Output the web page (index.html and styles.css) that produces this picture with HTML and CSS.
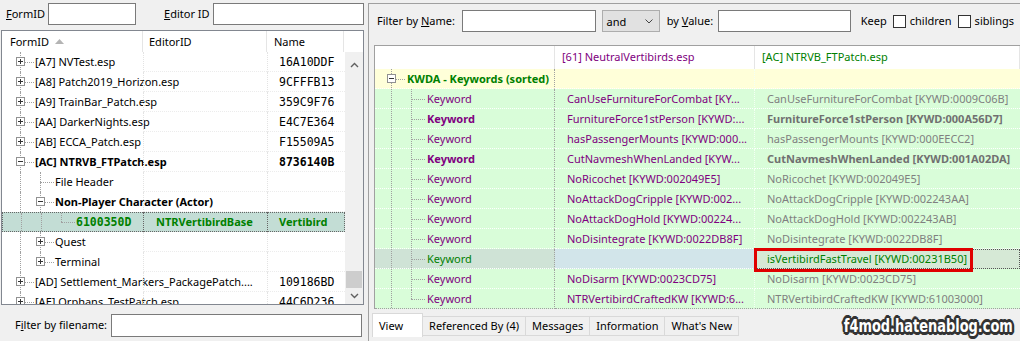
FILE: index.html
```html
<!DOCTYPE html>
<html lang="en">
<head>
    <meta charset="UTF-8">
    <title>FO4Edit - NTRVB_FTPatch.esp</title>
    <link rel="stylesheet" href="styles.css">
</head>
<body>
    <div class="app">
        <!-- left side: record tree -->
        <div class="left">
            <div class="id-filter">
                <span class="lbl"><u>F</u>ormID</span>
                <div class="field f-formid"></div>
                <span class="lbl lbl-editor"><u>E</u>ditor ID</span>
                <div class="field f-editor"></div>
            </div>

            <div class="tree">
                <div class="tree-head">
                    <div class="th c1">FormID
                        <svg class="sort" width="9" height="5" viewBox="0 0 9 5"><polygon points="0,5 4.5,0 9,5" fill="#b4b4b4"/></svg>
                    </div>
                    <div class="th c2">EditorID</div>
                    <div class="th c3">Name</div>
                    <div class="th c4"></div>
                </div>
                <div class="tree-main">
                    <div class="tree-rows">
                        <div class="trow">
                            <div class="c1"><span class="tw"><i class="box plus"></i></span><span class="txt">[A7] NVTest.esp</span></div>
                            <div class="c2"></div><div class="c3 mono">16A10DDF</div>
                        </div>
                        <div class="trow">
                            <div class="c1"><span class="tw"><i class="box plus"></i></span><span class="txt">[A8] Patch2019_Horizon.esp</span></div>
                            <div class="c2"></div><div class="c3 mono">9CFFFB13</div>
                        </div>
                        <div class="trow">
                            <div class="c1"><span class="tw"><i class="box plus"></i></span><span class="txt">[A9] TrainBar_Patch.esp</span></div>
                            <div class="c2"></div><div class="c3 mono">359C9F76</div>
                        </div>
                        <div class="trow">
                            <div class="c1"><span class="tw"><i class="box plus"></i></span><span class="txt">[AA] DarkerNights.esp</span></div>
                            <div class="c2"></div><div class="c3 mono">E4C7E364</div>
                        </div>
                        <div class="trow">
                            <div class="c1"><span class="tw"><i class="box plus"></i></span><span class="txt">[AB] ECCA_Patch.esp</span></div>
                            <div class="c2"></div><div class="c3 mono">F15509A5</div>
                        </div>
                        <div class="trow bold">
                            <div class="c1"><span class="tw"><i class="box"></i></span><span class="txt">[AC] NTRVB_FTPatch.esp</span></div>
                            <div class="c2"></div><div class="c3 mono">8736140B</div>
                        </div>
                        <div class="trow">
                            <div class="c1"><span class="guide"></span><span class="tw"></span><span class="txt">File Header</span></div>
                            <div class="c2"></div><div class="c3"></div>
                        </div>
                        <div class="trow">
                            <div class="c1"><span class="guide"></span><span class="tw"><i class="box"></i></span><span class="txt bold">Non-Player Character (Actor)</span></div>
                            <div class="c2"></div><div class="c3"></div>
                        </div>
                        <div class="trow sel">
                            <div class="c1"><span class="guide"></span><span class="guide"></span><span class="tw last"></span><span class="txt mono">6100350D</span></div>
                            <div class="c2">NTRVertibirdBase</div><div class="c3">Vertibird</div>
                        </div>
                        <div class="trow">
                            <div class="c1"><span class="guide"></span><span class="tw"><i class="box plus"></i></span><span class="txt">Quest</span></div>
                            <div class="c2"></div><div class="c3"></div>
                        </div>
                        <div class="trow">
                            <div class="c1"><span class="guide"></span><span class="tw last"><i class="box plus"></i></span><span class="txt">Terminal</span></div>
                            <div class="c2"></div><div class="c3"></div>
                        </div>
                        <div class="trow">
                            <div class="c1"><span class="tw"><i class="box plus"></i></span><span class="txt">[AD] Settlement_Markers_PackagePatch....</span></div>
                            <div class="c2"></div><div class="c3 mono">109186BD</div>
                        </div>
                        <div class="trow">
                            <div class="c1"><span class="tw"><i class="box plus"></i></span><span class="txt">[AE] Orphans_TestPatch.esp</span></div>
                            <div class="c2"></div><div class="c3 mono">44C6D236</div>
                        </div>
                    </div>
                    <div class="vscroll">
                        <div class="sb-btn up">
                            <svg width="9" height="6" viewBox="0 0 9 6"><polyline points="1,5 4.5,1.5 8,5" fill="none" stroke="#606060" stroke-width="1.4"/></svg>
                        </div>
                        <div class="sb-track"><div class="sb-thumb"></div></div>
                        <div class="sb-btn down">
                            <svg width="9" height="6" viewBox="0 0 9 6"><polyline points="1,1 4.5,4.5 8,1" fill="none" stroke="#606060" stroke-width="1.4"/></svg>
                        </div>
                    </div>
                </div>
            </div>

            <div class="file-filter">
                <span class="lbl">F<u>i</u>lter by filename:</span>
                <div class="field f-file"></div>
            </div>
        </div>

        <div class="splitter"></div>

        <!-- right side: record view -->
        <div class="right">
            <div class="view-filter">
                <span class="lbl">Filter by <u>N</u>ame:</span>
                <div class="field f-name"></div>
                <div class="combo">and
                    <svg width="8" height="5" viewBox="0 0 8 5"><polyline points="0.5,0.5 4,4 7.5,0.5" fill="none" stroke="#444" stroke-width="1"/></svg>
                </div>
                <span class="lbl lbl-value">by <u>V</u>alue:</span>
                <div class="field f-value"></div>
                <span class="lbl lbl-keep">Keep</span>
                <span class="check"></span><span class="lbl">children</span>
                <span class="check"></span><span class="lbl">siblings</span>
            </div>

            <div class="grid">
                <div class="grow ghead">
                    <div class="k"></div>
                    <div class="v1 purple">[61] NeutralVertibirds.esp</div>
                    <div class="v2 green">[AC] NTRVB_FTPatch.esp</div>
                </div>
                <div class="grow group">
                    <div class="k"><span class="tw"><i class="box"></i></span><span class="txt green semi">KWDA - Keywords (sorted)</span></div>
                    <div class="v1"></div>
                    <div class="v2"></div>
                </div>
                <div class="grow">
                    <div class="k"><span class="guide"></span><span class="tw"></span><span class="txt">Keyword</span></div>
                    <div class="v1">CanUseFurnitureForCombat [KY...</div>
                    <div class="v2">CanUseFurnitureForCombat [KYWD:0009C06B]</div>
                </div>
                <div class="grow strong">
                    <div class="k"><span class="guide"></span><span class="tw"></span><span class="txt">Keyword</span></div>
                    <div class="v1">FurnitureForce1stPerson [KYWD:...</div>
                    <div class="v2">FurnitureForce1stPerson [KYWD:000A56D7]</div>
                </div>
                <div class="grow">
                    <div class="k"><span class="guide"></span><span class="tw"></span><span class="txt">Keyword</span></div>
                    <div class="v1">hasPassengerMounts [KYWD:000...</div>
                    <div class="v2">hasPassengerMounts [KYWD:000EECC2]</div>
                </div>
                <div class="grow strong">
                    <div class="k"><span class="guide"></span><span class="tw"></span><span class="txt">Keyword</span></div>
                    <div class="v1">CutNavmeshWhenLanded [KYW...</div>
                    <div class="v2">CutNavmeshWhenLanded [KYWD:001A02DA]</div>
                </div>
                <div class="grow">
                    <div class="k"><span class="guide"></span><span class="tw"></span><span class="txt">Keyword</span></div>
                    <div class="v1">NoRicochet [KYWD:002049E5]</div>
                    <div class="v2">NoRicochet [KYWD:002049E5]</div>
                </div>
                <div class="grow">
                    <div class="k"><span class="guide"></span><span class="tw"></span><span class="txt">Keyword</span></div>
                    <div class="v1">NoAttackDogCripple [KYWD:002...</div>
                    <div class="v2">NoAttackDogCripple [KYWD:002243AA]</div>
                </div>
                <div class="grow">
                    <div class="k"><span class="guide"></span><span class="tw"></span><span class="txt">Keyword</span></div>
                    <div class="v1">NoAttackDogHold [KYWD:00224...</div>
                    <div class="v2">NoAttackDogHold [KYWD:002243AB]</div>
                </div>
                <div class="grow">
                    <div class="k"><span class="guide"></span><span class="tw"></span><span class="txt">Keyword</span></div>
                    <div class="v1">NoDisintegrate [KYWD:0022DB8F]</div>
                    <div class="v2">NoDisintegrate [KYWD:0022DB8F]</div>
                </div>
                <div class="grow focus">
                    <div class="k"><span class="guide"></span><span class="tw"></span><span class="txt">Keyword</span></div>
                    <div class="v1"></div>
                    <div class="v2">isVertibirdFastTravel [KYWD:00231B50]<span class="mark"></span></div>
                </div>
                <div class="grow">
                    <div class="k"><span class="guide"></span><span class="tw"></span><span class="txt">Keyword</span></div>
                    <div class="v1">NoDisarm [KYWD:0023CD75]</div>
                    <div class="v2">NoDisarm [KYWD:0023CD75]</div>
                </div>
                <div class="grow lastrow">
                    <div class="k"><span class="guide"></span><span class="tw last"></span><span class="txt">Keyword</span></div>
                    <div class="v1">NTRVertibirdCraftedKW [KYWD:6...</div>
                    <div class="v2">NTRVertibirdCraftedKW [KYWD:61003000]</div>
                </div>
            </div>

            <div class="tabs">
                <div class="tab on">View</div>
                <div class="tab">Referenced By (4)</div>
                <div class="tab">Messages</div>
                <div class="tab">Information</div>
                <div class="tab">What's New</div>
            </div>

            <div class="watermark">f4mod.hatenablog.com</div>
        </div>
    </div>
</body>
</html>
```

FILE: styles.css
```css
* {
    box-sizing: border-box;
}

body {
    margin: 0;
    width: 1020px;
    height: 341px;
    overflow: hidden;
    background: #f0f0f0;
    font-family: 'Noto Sans', sans-serif;
    font-size: 11px;
    color: #000;
}

.app {
    display: flex;
    height: 341px;
}

.lbl {
    line-height: 22px;
    white-space: nowrap;
}

.field {
    height: 22px;
    border: 1px solid #7a7a7a;
    background: #fff;
}

.mono {
    font-family: 'DejaVu Sans Mono', monospace;
    font-size: 11.5px;
}

.bold {
    font-weight: bold;
}

/* ---------- left pane ---------- */

.left {
    width: 364px;
    flex: none;
    display: flex;
    flex-direction: column;
}

.id-filter {
    height: 30px;
    display: flex;
    padding: 3px 0 0 6px;
}

.f-formid {
    width: 89px;
    margin-left: 3px;
}

.lbl-editor {
    margin-left: 28px;
}

.f-editor {
    width: 153px;
    margin-left: 3px;
}

.tree {
    width: 363px;
    height: 275px;
    margin-left: 1px;
    border: 1px solid #828790;
    background: #fff;
    display: flex;
    flex-direction: column;
    overflow: hidden;
}

.tree-head {
    height: 21px;
    display: flex;
    flex: none;
}

.th {
    line-height: 22px;
    border-right: 1px solid #e5e5e5;
    white-space: nowrap;
}

.th.c1 {
    width: 141px;
    padding-left: 8px;
}

.th.c2 {
    width: 124px;
    padding-left: 6px;
}

.th.c3 {
    width: 77px;
    padding-left: 7px;
}

.th.c4 {
    flex: 1;
    border-right: none;
}

.sort {
    margin-left: 3px;
    vertical-align: 2px;
}

.tree-main {
    flex: 1;
    display: flex;
    overflow: hidden;
}

.tree-rows {
    flex: 1;
    overflow: hidden;
}

.trow {
    height: 20px;
    display: flex;
}

.trow > div {
    height: 20px;
    line-height: 20px;
    white-space: nowrap;
    overflow: hidden;
}

.trow .c1 {
    width: 141px;
    display: flex;
    padding-left: 8px;
    overflow: visible;
}

.trow .c2 {
    width: 124px;
    padding-left: 12px;
    border-left: 1px dotted #e3e3e3;
    border-bottom: 1px dotted #ececec;
}

.trow .c3 {
    flex: 1;
    padding-left: 11px;
    border-left: 1px dotted #e3e3e3;
    border-bottom: 1px dotted #ececec;
}

.trow .txt {
    margin-left: 5px;
}

.trow.sel > div {
    background: #c3ddd5;
    color: #008000;
    font-weight: bold;
    border: 1px dotted #666;
    border-right: none;
    line-height: 18px;
}

.trow.sel .c3 {
    border-right: 1px dotted #666;
}

/* tree connector lines */
.tw,
.guide {
    position: relative;
    width: 20px;
    height: 100%;
    flex: none;
}

.guide::before,
.tw::before {
    content: "";
    position: absolute;
    left: 10px;
    top: 0;
    bottom: 0;
    border-left: 1px dotted #a0a0a0;
}

.tw.last::before {
    bottom: 50%;
}

.tw::after {
    content: "";
    position: absolute;
    left: 10px;
    right: -4px;
    top: 50%;
    border-top: 1px dotted #a0a0a0;
}

.box {
    position: absolute;
    left: 6px;
    top: 50%;
    margin-top: -5px;
    width: 9px;
    height: 9px;
    border: 1px solid #919191;
    background: #fff;
    z-index: 1;
}

.box::before {
    content: "";
    position: absolute;
    left: 1px;
    right: 1px;
    top: 3px;
    height: 1px;
    background: #333;
}

.box.plus::after {
    content: "";
    position: absolute;
    top: 1px;
    bottom: 1px;
    left: 3px;
    width: 1px;
    background: #333;
}

.vscroll {
    width: 18px;
    flex: none;
    display: flex;
    flex-direction: column;
    background: #f0f0f0;
    padding-top: 3px;
}

.sb-btn {
    height: 20px;
    display: flex;
    align-items: center;
    justify-content: center;
}

.sb-btn.down {
    height: 16px;
}

.sb-track {
    flex: 1;
    display: flex;
    flex-direction: column;
    justify-content: flex-end;
    padding: 0 1px;
}

.sb-thumb {
    height: 17px;
    background: #cdcdcd;
}

.file-filter {
    flex: 1;
    display: flex;
    padding: 9px 0 0 15px;
}

.f-file {
    flex: 1;
    height: 23px;
    margin: 0 2px 0 4px;
}

/* ---------- right pane ---------- */

.splitter {
    width: 4px;
    flex: none;
}

.right {
    flex: 1;
    margin-top: 3px;
    border-top: 1px solid #a0a0a0;
    border-left: 1px solid #a0a0a0;
    display: flex;
    flex-direction: column;
    position: relative;
    overflow: hidden;
}

.view-filter {
    height: 41px;
    flex: none;
    display: flex;
    padding: 6px 0 0 8px;
}

.f-name {
    width: 136px;
    margin-left: 7px;
}

.combo {
    width: 59px;
    height: 22px;
    margin-left: 6px;
    padding: 0 6px 0 4px;
    background: #e1e1e1;
    border: 1px solid #adadad;
    display: flex;
    align-items: center;
    justify-content: space-between;
}

.lbl-value {
    margin-left: 7px;
}

.f-value {
    width: 135px;
    margin-left: 5px;
}

.lbl-keep {
    margin: 0 6px 0 10px;
}

.check {
    width: 13px;
    height: 13px;
    margin: 5px 4px 0 0;
    border: 1px solid #333;
    background: #fff;
    flex: none;
}

.check + .lbl {
    margin-right: 6px;
}

.grid {
    height: 264px;
    flex: none;
    margin-left: 5px;
    border-top: 1px solid #a0a0a0;
    border-left: 1px solid #a0a0a0;
}

.grow {
    height: 20px;
    display: flex;
    background: #d9fdd9;
}

.grow > div {
    height: 20px;
    line-height: 19px;
    white-space: nowrap;
    overflow: hidden;
    border-bottom: 1px dotted #fff;
    color: #800080;
    flex: none;
}

.grow .k {
    width: 180px;
    display: flex;
    padding-left: 6px;
    border-right: 1px dotted #a0a0a0;
}

.grow .v1 {
    width: 200px;
    padding-left: 12px;
    border-right: 1px dotted #f4fff4;
}

.grow .v2 {
    flex: 1;
    padding-left: 12px;
    color: #808080;
    position: relative;
    overflow: visible;
}

.grow .txt {
    margin-left: 6px;
}

.grow.strong .k,
.grow.strong .v2 {
    font-weight: bold;
}

.grow.strong .v2 {
    color: #707070;
}

.ghead {
    height: 23px;
    background: #fff;
}

.ghead > div {
    height: 23px;
    line-height: 22px;
    border-bottom: none;
    border-right: 1px solid #e5e5e5;
}

.ghead .v1 {
    padding-left: 7px;
    border-right: 1px solid #e5e5e5;
}

.ghead .k {
    border-right: 1px solid #e5e5e5;
}

.ghead .v2 {
    padding-left: 7px;
}

.purple {
    color: #800080;
}

.ghead .green,
.green {
    color: #008000;
}

.semi {
    font-weight: bold;
}

.group {
    background: #ffffd9;
}

.grow.focus .k {
    background: #cfe3d6;
    color: #008000;
}

.grow.focus .v1 {
    background: #d2e5ea;
}

.grow.focus .v2 {
    background: #d6e9d6;
    color: #008000;
    border: 1px dotted #555;
    line-height: 18px;
    padding-left: 11px;
}

.mark {
    position: absolute;
    left: -2px;
    top: -2px;
    width: 219px;
    height: 24px;
    border: 3px solid #e00000;
}

.grow.lastrow > div {
    border-bottom-color: #a0a0a0;
}

.tabs {
    display: flex;
    align-items: flex-start;
    margin: 4px 0 0 3px;
    height: 24px;
    flex: none;
}

.tab {
    height: 20px;
    margin-top: 3px;
    padding: 0 6px;
    line-height: 18px;
    border: 1px solid #d9d9d9;
    border-left: none;
    white-space: nowrap;
}

.tab.on {
    height: 24px;
    margin-top: 0;
    padding: 3px 19px 0 6px;
    background: #fff;
    border-left: 1px solid #d9d9d9;
    border-bottom: none;
}

.watermark {
    position: absolute;
    right: 7px;
    bottom: 4px;
    font-family: 'DejaVu Sans', sans-serif;
    font-weight: bold;
    font-size: 18px;
    line-height: 22px;
    color: #fff;
    transform: scaleX(0.72);
    transform-origin: right center;
    white-space: nowrap;
    text-shadow:
        2px 0 #333, -2px 0 #333, 0 2px #333, 0 -2px #333,
        2px 2px #333, -2px -2px #333, 2px -2px #333, -2px 2px #333,
        3px 0 #333, -3px 0 #333, 0 3px #333, 0 -3px #333,
        3px 1px #555, -3px -1px #555, 1px 3px #555, -1px -3px #555,
        0 0 4px #888;
}
```
